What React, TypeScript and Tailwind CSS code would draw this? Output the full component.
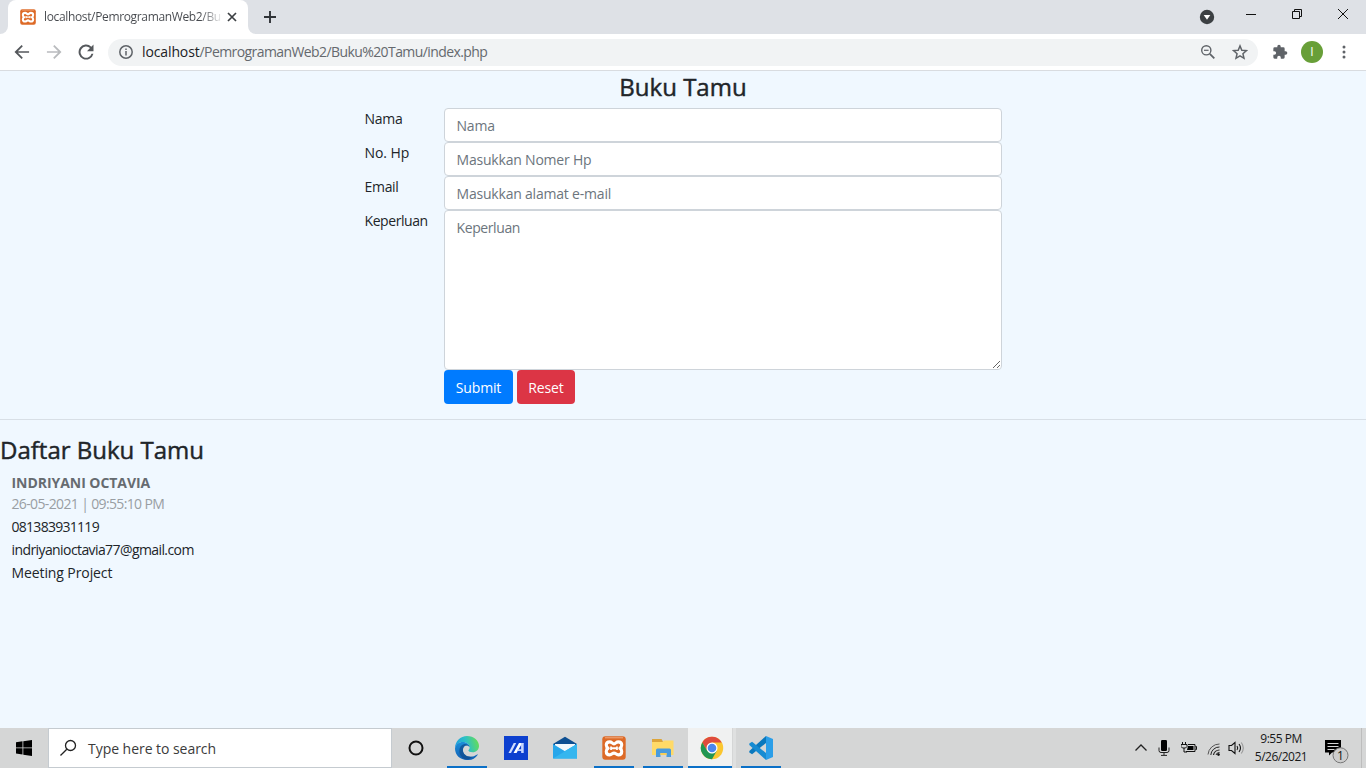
import React from "react";

function XamppIcon({ size }: { size: number }) {
  return (
    <svg width={size} height={size} viewBox="0 0 24 24">
      <rect x=".3" y=".3" width="23.4" height="23.4" rx="3" fill="#dd6a27" />
      <path d="M3 1.800h18" stroke="#f3b48c" strokeWidth=".9" />
      <g transform="translate(12 12.300) scale(1.060 1.100) translate(-12 -12.100)">
        <path
          d="M8 6.200c-2 0-3.300 1.300-3.300 3 0 1.400.8 2.300 1.800 2.900-1 .5-1.800 1.400-1.800 2.800 0 1.800 1.300 3.100 3.200 3.100 2.100 0 2.500-1.600 4.100-1.600s2 1.600 4.100 1.600c1.900 0 3.200-1.300 3.200-3.100 0-1.400-.8-2.300-1.800-2.800 1-.6 1.800-1.500 1.800-2.900 0-1.700-1.300-3-3.300-3S13.600 8 12 8 10 6.200 8 6.200Z"
          fill="none"
          stroke="#fff"
          strokeWidth="2.900"
          strokeLinejoin="round"
        />
        <path d="M9.200 10.500v3.200M14.800 10.500v3.200M9.200 12.100h5.600" fill="none" stroke="#fff" strokeWidth="1.700" />
      </g>
    </svg>
  );
}

function TabStrip() {
  return (
    <div className="flex h-[34px] bg-[#dee1e6] pr-3">
      <div className="flex w-2 items-end bg-white">
        <div className="h-full w-2 rounded-br-lg bg-[#dee1e6]" />
      </div>
      <div className="flex h-full w-[240px] items-center rounded-t-lg bg-white pl-3">
        <XamppIcon size={16} />
        <div className="ml-2 h-5 w-[178px] bg-gradient-to-r from-[#45484d] from-88% to-[#45484d10] bg-clip-text text-[12px] leading-5 tracking-[-0.35px] whitespace-nowrap text-transparent">
          localhost/PemrogramanWeb2/Bu
        </div>
        <svg className="ml-[5px] shrink-0" width="10" height="10" viewBox="0 0 10 10">
          <path d="M1 1l8 8M9 1L1 9" stroke="#3c4043" strokeWidth="1.700" />
        </svg>
      </div>
      <div className="flex w-2 bg-white">
        <div className="h-full w-2 rounded-bl-lg bg-[#dee1e6]" />
      </div>
      <svg className="mt-[10px] ml-[7px]" width="14" height="14" viewBox="0 0 14 14">
        <path d="M7 1v12M1 7h12" stroke="#303338" strokeWidth="1.900" />
      </svg>
      <div className="grow" />
      <div className="flex">
        <svg className="mt-[9px] mr-[30px]" width="16" height="16" viewBox="0 0 16 16">
          <circle cx="8" cy="8" r="7.200" fill="#3c4043" />
          <path d="M4.700 6h6.600L8 10.800Z" fill="#fff" />
        </svg>
        <svg className="mt-[9px] mr-[34px]" width="12" height="12" viewBox="0 0 12 12">
          <path d="M1 5.500h10" stroke="#111" />
        </svg>
        <svg className="mt-[8px] mr-[34px]" width="12" height="12" viewBox="0 0 12 12">
          <path d="M1.500 3.500h7v7h-7zM3.500 3.500v-2h7v7h-2" fill="none" stroke="#111" />
        </svg>
        <svg className="mt-[8px] mr-[5px]" width="12" height="12" viewBox="0 0 12 12">
          <path d="M1 1l10 10M11 1L1 11" stroke="#111" />
        </svg>
      </div>
    </div>
  );
}

function AddressBar() {
  return (
    <div className="flex h-[37px] items-center border-b border-[#d9dce0] bg-white">
      <svg className="ml-3" width="20" height="20" viewBox="0 0 24 24" fill="#55585c">
        <path d="M20.500 11H7.100l5.900-5.900L11.500 3.500 3 12l8.500 8.500 1.500-1.600L7.100 13h13.400z" />
      </svg>
      <svg className="ml-3" width="20" height="20" viewBox="0 0 24 24" fill="#b9bbbe">
        <path d="M3.500 11h13.400L11 5.100l1.500-1.600L21 12l-8.500 8.500-1.500-1.600 5.900-5.900H3.500z" />
      </svg>
      <svg className="ml-3" width="20" height="20" viewBox="0 0 24 24" fill="#55585c">
        <path d="M18.400 5.600A9 9 0 1 0 20.900 14h-2.300a6.700 6.700 0 1 1-1.800-6.700L13.200 11H21V3.100z" />
      </svg>
      <div className="ml-3 flex h-[27px] w-[1150px] items-center rounded-full bg-[#f1f3f4] pl-[10px]">
        <svg width="16" height="16" viewBox="0 0 16 16">
          <circle cx="8" cy="8" r="6.200" fill="none" stroke="#5f6368" strokeWidth="1.500" />
          <path d="M8 7v4.500M8 4.400V6" stroke="#5f6368" strokeWidth="1.500" />
        </svg>
        <div className="ml-2 text-[14px] leading-5 tracking-[-0.59px] whitespace-nowrap text-[#65696e]">
          <span className="tracking-[-0.12px] text-[#202124]">localhost</span>/PemrogramanWeb2/Buku%20Tamu/index.php
        </div>
        <div className="grow" />
        <svg className="mr-4" width="16" height="16" viewBox="0 0 16 16">
          <circle cx="6.300" cy="6.300" r="4.600" fill="none" stroke="#5f6368" strokeWidth="1.400" />
          <path d="M9.800 9.800l4.500 4.500" stroke="#5f6368" strokeWidth="1.800" />
          <path d="M4 6.300h4.600" stroke="#5f6368" strokeWidth="1.200" />
        </svg>
        <svg className="mr-[10px]" width="16" height="16" viewBox="0 0 24 24">
          <path
            d="M12 2.800l2.700 6.500 7 .6-5.300 4.600 1.600 6.900-6-3.700-6 3.700 1.600-6.900L2.300 9.900l7-.6z"
            fill="none"
            stroke="#5f6368"
            strokeWidth="2.200"
          />
        </svg>
      </div>
      <svg className="ml-[14px]" width="16" height="16" viewBox="0 0 24 24" fill="#5f6368">
        <path d="M20.500 11H19V7a2 2 0 0 0-2-2h-4V3.500a2.500 2.500 0 0 0-5 0V5H4a2 2 0 0 0-2 2v3.800h1.500a2.700 2.700 0 0 1 0 5.400H2V20a2 2 0 0 0 2 2h3.800v-1.500a2.700 2.700 0 0 1 5.400 0V22H17a2 2 0 0 0 2-2v-4h1.500a2.500 2.500 0 0 0 0-5z" />
      </svg>
      <div className="ml-[13px] flex size-[22px] items-center justify-center rounded-full bg-[#689f38] text-[12px] text-white">
        I
      </div>
      <svg className="ml-[13px]" width="16" height="16" viewBox="0 0 16 16" fill="#5f6368">
        <circle cx="8" cy="3" r="1.500" />
        <circle cx="8" cy="8" r="1.500" />
        <circle cx="8" cy="13" r="1.500" />
      </svg>
    </div>
  );
}

function GuestForm() {
  const field =
    "block h-[34px] w-[558px] rounded-[4px] border border-[#ced4da] bg-white px-[11.5px] pt-[1px] text-[14px] tracking-[-0.2px] outline-none placeholder:text-[#6c757d]";
  return (
    <form className="mx-auto grid w-[638px] grid-cols-[80px_558px] text-[14px] leading-[22px] text-[#212529]">
      <label className="pl-[0.5px] tracking-[-0.3px]">Nama</label>
      <input className={field} placeholder="Nama" />
      <label className="pl-[0.5px] tracking-[-0.05px]">No. Hp</label>
      <input className={field} placeholder="Masukkan Nomer Hp" />
      <label className="pl-[0.5px] tracking-[-0.3px]">Email</label>
      <input className={field} placeholder="Masukkan alamat e-mail" />
      <label className="pl-[0.5px] tracking-[-0.42px]">Keperluan</label>
      <textarea
        className="block h-[160px] w-[558px] rounded-[4px] border border-[#ced4da] bg-white px-[11.5px] py-[6px] text-[14px] leading-[22px] tracking-[-0.4px] outline-none placeholder:text-[#6c757d]"
        placeholder="Keperluan"
      />
      <div />
      <div className="flex gap-1 tracking-[-0.15px] text-white">
        <button type="button" className="h-[34px] w-[69px] rounded-[4px] bg-[#007bff] pt-[1px]">
          Submit
        </button>
        <button type="button" className="h-[34px] w-[58px] rounded-[4px] bg-[#dc3545] pt-[1px]">
          Reset
        </button>
      </div>
    </form>
  );
}

function GuestList() {
  return (
    <section className="text-[14px] leading-[23px] text-[#212529]">
      <h3 className="h-[30px] text-[24px] leading-[30px] font-medium [-webkit-text-stroke:0.45px_#212529]">
        Daftar Buku Tamu
      </h3>
      <div className="mt-[7px] pl-[11.5px]">
        <p className="h-[21px] leading-[21px] font-bold tracking-[-0.05px] text-[#666b70]">INDRIYANI OCTAVIA</p>
        <p className="h-[22px] leading-[22px] tracking-[-0.64px] text-[#999ea3]">26-05-2021 | 09:55:10 PM</p>
        <p className="tracking-[-0.72px]">081383931119</p>
        <p className="tracking-[-0.59px]">indriyanioctavia77@gmail.com</p>
        <p className="tracking-[-0.1px]">Meeting Project</p>
      </div>
    </section>
  );
}

function EdgeIcon() {
  return (
    <svg width="24" height="24" viewBox="0 0 24 24">
      <defs>
        <linearGradient id="edgeTop" x1="0" y1=".6" x2="1" y2=".4">
          <stop offset="0" stopColor="#1b9de2" />
          <stop offset=".5" stopColor="#2dc1c5" />
          <stop offset="1" stopColor="#67dd55" />
        </linearGradient>
        <linearGradient id="edgeBody" x1="0" y1="0" x2="0" y2="1">
          <stop offset="0" stopColor="#1b8fd9" />
          <stop offset="1" stopColor="#1160b5" />
        </linearGradient>
      </defs>
      <path d="M0 12.500C0 5 5.500 0 12 0c7 0 12 4.900 12 10 0 3.800-3 6.300-6.300 6.300-2.800 0-4.300-.9-4.300-1.700 0-.7 1.200-1.100 1.200-3.100C14.600 8.500 11.700 6 8 6c-4.300 0-7 2.700-8 6.500Z" fill="url(#edgeTop)" />
      <path d="M0 12.500C.7 8 4 5.900 7.800 5.900c3.900 0 6.800 2.700 6.800 5.200-.6-1-1.700-1.700-3-1.700-2.200 0-3.700 2-3.700 4.600 0 4.700 4.800 7.600 9.600 6.500 2.200-.5 3.500-1.600 4.600-2.100.4-.2.700.2.500.5A12 12 0 0 1 12.200 24C5 24 0 18.900 0 12.500Z" fill="url(#edgeBody)" />
      <path d="M7.900 14c0 4.700 4.800 7.600 9.600 6.500-2 2.200-4.400 3.200-6.700 3C7 22.500 4.300 18.900 4.300 15c0-3.300 1.600-5.500 4.400-6.700 2.200-.9 4.800.3 5.900 2.800-.6-1-1.700-1.700-3-1.700-2.200 0-3.700 2-3.700 4.600Z" fill="#104a8a" opacity=".7" />
    </svg>
  );
}

function MyAsusIcon() {
  return (
    <svg width="24" height="24" viewBox="0 0 24 24">
      <rect width="24" height="24" fill="#0d40cf" />
      <path d="M4.500 17L9.700 7h2.500L7 17z" fill="#cfdcff" />
      <path d="M9.500 17L15 7h4.700l-2.700 2.200L12.500 17z" fill="#fff" />
      <path d="M17 7h2.700v10h-2.500zM14 13.300h4v1.800h-5z" fill="#c5d5ff" />
    </svg>
  );
}

function MailIcon() {
  return (
    <svg width="24" height="24" viewBox="0 0 24 24">
      <path d="M0 8L12 .7 24 8v3H0z" fill="#0d4f92" />
      <path d="M2 8h20v8H2z" fill="#f2f8fc" />
      <path d="M0 8l12 7.200L24 8v14.500H0z" fill="#27a6ea" />
      <path d="M2 8.200h20l-9.600 6.600L2 8.200z" fill="#f2f8fc" />
      <path d="M24 8v14.500L11.900 15z" fill="#41c3f5" />
      <path d="M0 22.500L24 8v14.500z" fill="#35b6ef" />
    </svg>
  );
}

function FolderIcon() {
  return (
    <svg width="24" height="24" viewBox="0 0 24 24">
      <path d="M1 3h9.500l1.500 2.500V8H1z" fill="#dda53a" />
      <path d="M1 6h10.500L13 4.500h9.500V19H1z" fill="#ffda67" />
      <path d="M5 21v-7q0-1.500 1.500-1.500h12Q20 12.500 20 14v7h-4.500v-4h-6v4z" fill="#4a9bdc" />
      <path d="M9.500 17h6v2h-6z" fill="#f8ce57" />
    </svg>
  );
}

function ChromeIcon() {
  return (
    <svg width="24" height="24" viewBox="0 0 24 24">
      <circle cx="12" cy="12" r="11.200" fill="#fbc62f" />
      <path d="M12 6.500h9.700A11.200 11.200 0 0 0 2.300 6.400L7.200 14.800z" fill="#df4b3d" />
      <path d="M2.300 6.400A11.200 11.200 0 0 0 12 23.200l4.800-8.400-4.700 2.600-4.900-2.600z" fill="#219653" />
      <circle cx="12" cy="12" r="5.500" fill="#fff" />
      <circle cx="12" cy="12" r="4.300" fill="#4b86ed" />
    </svg>
  );
}

function CodeIcon() {
  return (
    <svg width="24" height="24" viewBox="0 0 24 24">
      <path d="M17 0v7L3.100 18.200.3 16.500v-1.600z" fill="#0a78bd" />
      <path d="M17 24v-7L3.100 5.800.3 7.500v1.600z" fill="#168bd2" />
      <path d="M17 0l7 3v18l-7 3z" fill="#2b9ee8" />
    </svg>
  );
}

function TaskItem({ children, open }: { children: React.ReactNode; open?: boolean }) {
  return (
    <div className="flex h-full w-[49px] flex-col items-center">
      <div className="flex h-[38px] items-center pt-[2px] pl-[1px]">{children}</div>
      <div className={open ? "h-[2px] w-10 bg-[#0b70c7]" : "h-[2px] w-10"} />
    </div>
  );
}

function SystemTray() {
  return (
    <div className="flex h-full text-black">
      <svg className="mt-[15px]" width="14" height="10" viewBox="0 0 14 10">
        <path d="M1.500 7.500L7 2l5.500 5.500" fill="none" stroke="#222" strokeWidth="1.300" />
      </svg>
      <svg className="mt-[12px] ml-[10px]" width="12" height="16" viewBox="0 0 12 16">
        <rect x="3" y="0" width="6" height="11" rx="1.200" />
        <path d="M1 7.500v3q0 2 2 2h6q2 0 2-2v-3M6 12v3M3 15.400h6" fill="none" stroke="#222" />
      </svg>
      <svg className="mt-[14px] ml-[11px]" width="16" height="12" viewBox="0 0 16 12">
        <path d="M1.500 0v2M4.500 0v2M0 2.500h6v2L4.500 6h-3L0 4.500zM3 6v4h3" fill="none" stroke="#111" />
        <path d="M7 2.500h7v7H5M14.500 4.500h1v3h-1" fill="none" stroke="#111" />
        <path d="M7 4h5.500v4H6z" />
      </svg>
      <svg className="mt-[14px] ml-[10px]" width="14" height="14" viewBox="0 0 14 14" fill="none" stroke="#222">
        <path d="M1 12.500A11.500 11.500 0 0 1 12.500 2" stroke="#555" />
        <path d="M3.800 13A8.500 8.500 0 0 1 12.500 5" />
        <path d="M6.500 13A6 6 0 0 1 12.500 8" strokeWidth="1.200" />
        <path d="M9 13a3.500 3.500 0 0 1 3.500-2.500" />
        <circle cx="11.500" cy="12.500" r="1" fill="#111" />
      </svg>
      <svg className="mt-[12px] ml-[7px]" width="17" height="16" viewBox="0 0 17 16" fill="none" stroke="#111" strokeWidth="1.100">
        <path d="M1 5.500h2.500L7 2.500v11l-3.500-3H1z" />
        <path d="M9 6q1.500 2 0 4M11 4q3 4 0 8" />
        <path d="M13.300 2.500q4 5.500 0 11" stroke="#999" />
      </svg>
      <div className="ml-[9px] w-[54px] pt-[2px] text-center text-[12px] leading-[18px] tracking-[-0.5px] whitespace-nowrap text-[#181818]">
        <div>9:55 PM</div>
        <div>5/26/2021</div>
      </div>
      <svg className="mt-[10px] ml-[16px]" width="26" height="26" viewBox="0 0 26 26">
        <path d="M1 2h16v12.500H8L5 17.500v-3H1z" />
        <path d="M3.500 5.500h11M3.500 8.500h11M3.500 11.500h7" stroke="#d5d5d5" />
        <circle cx="16.500" cy="17.300" r="7.500" fill="#cdcdcd" stroke="#777" />
        <text x="16.500" y="21.700" textAnchor="middle" fontSize="12" fill="#111">1</text>
      </svg>
      <div className="ml-[11px] h-full w-px bg-[#bdbdbd]" />
      <div className="w-1" />
    </div>
  );
}

function Taskbar() {
  return (
    <footer className="flex h-10 bg-[#d5d6d6]">
      <div className="flex w-12 items-center justify-center">
        <svg width="16" height="16" viewBox="0 0 16 16">
          <path d="M0 2.200L6.500 1.300v6.200H0zM7.300 1.200L16 0v7.500H7.300zM0 8.300h6.500v6.200L0 13.600zM7.300 8.300H16V16l-8.700-1.200z" />
        </svg>
      </div>
      <div className="flex h-10 w-[344px] items-center border border-[#c5cbd0] bg-white pl-[10px]">
        <svg width="18" height="18" viewBox="0 0 18 18" fill="none" stroke="#222" strokeWidth="1.300">
          <circle cx="11.500" cy="6.500" r="5" />
          <path d="M7.800 10.200L1.500 16.500" />
        </svg>
        <span className="ml-[11px] text-[14px] tracking-[-0.04px] whitespace-nowrap text-[#3b3b3b]">Type here to search</span>
      </div>
      <div className="flex w-12 items-center justify-center">
        <svg width="16" height="16" viewBox="0 0 16 16">
          <circle cx="8" cy="8" r="6.500" fill="none" stroke="#111" strokeWidth="2" />
        </svg>
      </div>
      <div className="ml-[2px] flex">
        <TaskItem open><EdgeIcon /></TaskItem>
        <TaskItem><MyAsusIcon /></TaskItem>
        <TaskItem><MailIcon /></TaskItem>
        <TaskItem open><XamppIcon size={24} /></TaskItem>
        <TaskItem open><FolderIcon /></TaskItem>
      </div>
      <div className="ml-[1px] flex w-11 flex-col items-center border-b-2 border-[#0b70c7] bg-[#f0f1f1] pt-[8px] pl-[3px]">
        <ChromeIcon />
      </div>
      <div className="ml-px w-[3px] bg-[#dfe0e0]" />
      <TaskItem open><CodeIcon /></TaskItem>
      <div className="grow" />
      <SystemTray />
    </footer>
  );
}

export default function App() {
  return (
    <div className="flex h-[768px] w-[1366px] flex-col overflow-hidden font-['Open_Sans','Noto_Sans',sans-serif] font-[370]">
      <TabStrip />
      <AddressBar />
      <main className="min-h-0 grow bg-[#f0f8ff]">
        <h3 className="h-[37px] text-center text-[24px] leading-[32px] font-medium text-[#212529] [-webkit-text-stroke:0.45px_#212529]">
          Buku Tamu
        </h3>
        <GuestForm />
        <hr className="mt-[15px] mb-[15px] border-t border-[#d8dfe6]" />
        <GuestList />
      </main>
      <Taskbar />
    </div>
  );
}
